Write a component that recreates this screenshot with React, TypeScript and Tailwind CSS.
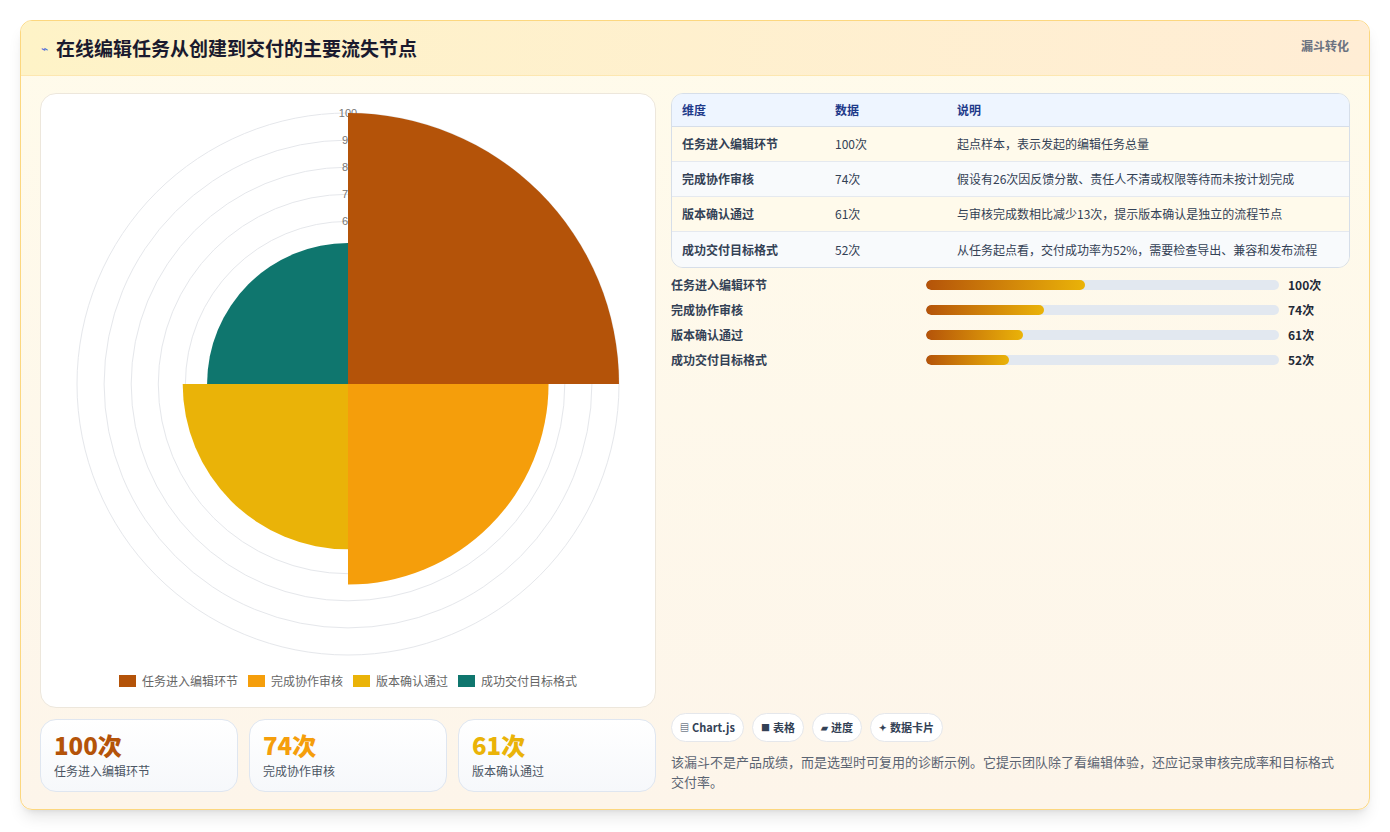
import React from "react";

const items = [
  { name: "任务进入编辑环节", v: 100, color: "#b45309", note: "起点样本，表示发起的编辑任务总量" },
  { name: "完成协作审核", v: 74, color: "#f59e0b", note: "假设有26次因反馈分散、责任人不清或权限等待而未按计划完成" },
  { name: "版本确认通过", v: 61, color: "#eab308", note: "与审核完成数相比减少13次，提示版本确认是独立的流程节点" },
  { name: "成功交付目标格式", v: 52, color: "#0f766e", note: "从任务起点看，交付成功率为52%，需要检查导出、兼容和发布流程" },
];

const CX = 307;
const CY = 290;
const K = 2.71;

// quadrant wedge: start angle in degrees (0 = up, clockwise)
function wedge(r: number, q: number) {
  const pt = (deg: number) => {
    const a = ((deg - 90) * Math.PI) / 180;
    return `${CX + r * Math.cos(a)} ${CY + r * Math.sin(a)}`;
  };
  return `M ${CX} ${CY} L ${pt(q * 90)} A ${r} ${r} 0 0 1 ${pt(q * 90 + 90)} Z`;
}

const PolarChart: React.FC = () => (
  <svg width="615" height="570" viewBox="0 0 615 570">
    {[10, 20, 30, 40, 50, 60, 70, 80, 90, 100].map((t) => (
      <circle key={t} cx={CX} cy={CY} r={t * K} fill="none" stroke="#e5e7eb" strokeWidth="1" />
    ))}
    {[60, 70, 80, 90, 100].map((t) => (
      <text key={t} x={CX} y={CY - t * K + 4} textAnchor="middle" fontSize="11" fill="#777" fontFamily="Liberation Sans, sans-serif">
        {t}
      </text>
    ))}
    {items.map((it, i) => (
      <path key={it.name} d={wedge(it.v * K, i)} fill={it.color} />
    ))}
  </svg>
);

const chips = [
  { icon: "▤", label: "Chart.js" },
  { icon: "■", label: "表格" },
  { icon: "▰", label: "进度" },
  { icon: "✦", label: "数据卡片" },
];

export default function App() {
  return (
    <div className="w-[1390px] h-[832px] bg-white p-[20px]" style={{ fontFamily: '"Noto Sans CJK SC", "Noto Sans", sans-serif' }}>
      <div className="h-[790px] w-[1350px] rounded-xl border border-[#fcd77f] bg-gradient-to-b from-[#fffbeb] to-[#fdf5ea] shadow-lg flex flex-col overflow-hidden">
        <div className="h-[55px] shrink-0 bg-gradient-to-r from-[#fef3c7] to-[#ffedd5] border-b border-[#fde7b0] flex items-center justify-between px-5">
          <div className="flex items-center gap-2">
            <span className="text-[12px] text-[#4f6ed8]">⌁</span>
            <h1 className="text-[19px] font-bold text-[#1a1a2e]">在线编辑任务从创建到交付的主要流失节点</h1>
          </div>
          <span className="text-[12px] font-bold text-[#6b7280] self-start mt-[16px]">漏斗转化</span>
        </div>
        <div className="flex-1 flex gap-[15px] px-[19px] pt-[17px] pb-[18px]">
          <div className="w-[616px] flex flex-col gap-[11px]">
            <div className="h-[615px] bg-white rounded-2xl border border-[#ede7dc] flex flex-col items-center">
              <PolarChart />
              <div className="flex items-center gap-[10px] mt-[8px] text-[12px] text-[#666]">
                {items.map((it) => (
                  <div key={it.name} className="flex items-center gap-[6px]">
                    <span className="w-[17px] h-[12px]" style={{ background: it.color }} />
                    {it.name}
                  </div>
                ))}
              </div>
            </div>
            <div className="flex gap-[11px]">
              {items.slice(0, 3).map((it) => (
                <div key={it.name} className="w-[198px] h-[73px] rounded-2xl border border-[#dfe6f0] bg-gradient-to-b from-white to-[#f6f8fb] px-[13px] pt-[10px]">
                  <div className="text-[24px] font-extrabold leading-[30px]" style={{ color: it.color }}>{it.v}次</div>
                  <div className="text-[12px] text-[#4b5563] mt-[2px]">{it.name}</div>
                </div>
              ))}
            </div>
          </div>
          <div className="flex-1 flex flex-col">
            <div className="rounded-xl border border-[#d6dee9] overflow-hidden text-[12px]">
              <div className="flex h-[33px] items-center bg-[#eef5ff] border-b border-[#d6dee9] font-bold text-[#1e3a8a]">
                <div className="w-[163px] pl-[10px]">维度</div>
                <div className="w-[122px]">数据</div>
                <div>说明</div>
              </div>
              {items.map((it, i) => (
                <div key={it.name} className={`flex h-[35px] items-center text-[#334155] ${i % 2 === 0 ? "bg-[#fffaeb]" : "bg-[#f8fafc]"} ${i < 3 ? "border-b border-[#e5e9ef]" : ""}`}>
                  <div className="w-[163px] pl-[10px] font-semibold">{it.name}</div>
                  <div className="w-[122px]">{it.v}次</div>
                  <div>{it.note}</div>
                </div>
              ))}
            </div>
            <div className="mt-[10px] flex flex-col gap-[11px] text-[12px] font-semibold text-[#334155]">
              {items.map((it) => (
                <div key={it.name} className="flex items-center h-[14px]">
                  <div className="w-[255px]">{it.name}</div>
                  <div className="w-[353px] h-[10px] rounded-full bg-[#e2e8f0] overflow-hidden">
                    <div className="h-full rounded-full bg-gradient-to-r from-[#b45309] to-[#eab308]" style={{ width: `${it.v * 0.45}%` }} />
                  </div>
                  <div className="ml-[9px] font-bold text-[#1f2937]">{it.v}次</div>
                </div>
              ))}
            </div>
            <div className="flex-1" />
            <div className="flex gap-[8px]">
              {chips.map((c) => (
                <div key={c.label} className="h-[29px] px-[8px] rounded-full border border-[#e5e7eb] bg-white flex items-center gap-[3px] text-[11px] font-bold text-[#334155]">
                  <span className="text-[9px]">{c.icon}</span>
                  {c.label}
                </div>
              ))}
            </div>
            <p className="mt-[10px] text-[13px] leading-[20px] text-[#5b6472] pr-[4px]">
              该漏斗不是产品成绩，而是选型时可复用的诊断示例。它提示团队除了看编辑体验，还应记录审核完成率和目标格式交付率。
            </p>
          </div>
        </div>
      </div>
    </div>
  );
}
